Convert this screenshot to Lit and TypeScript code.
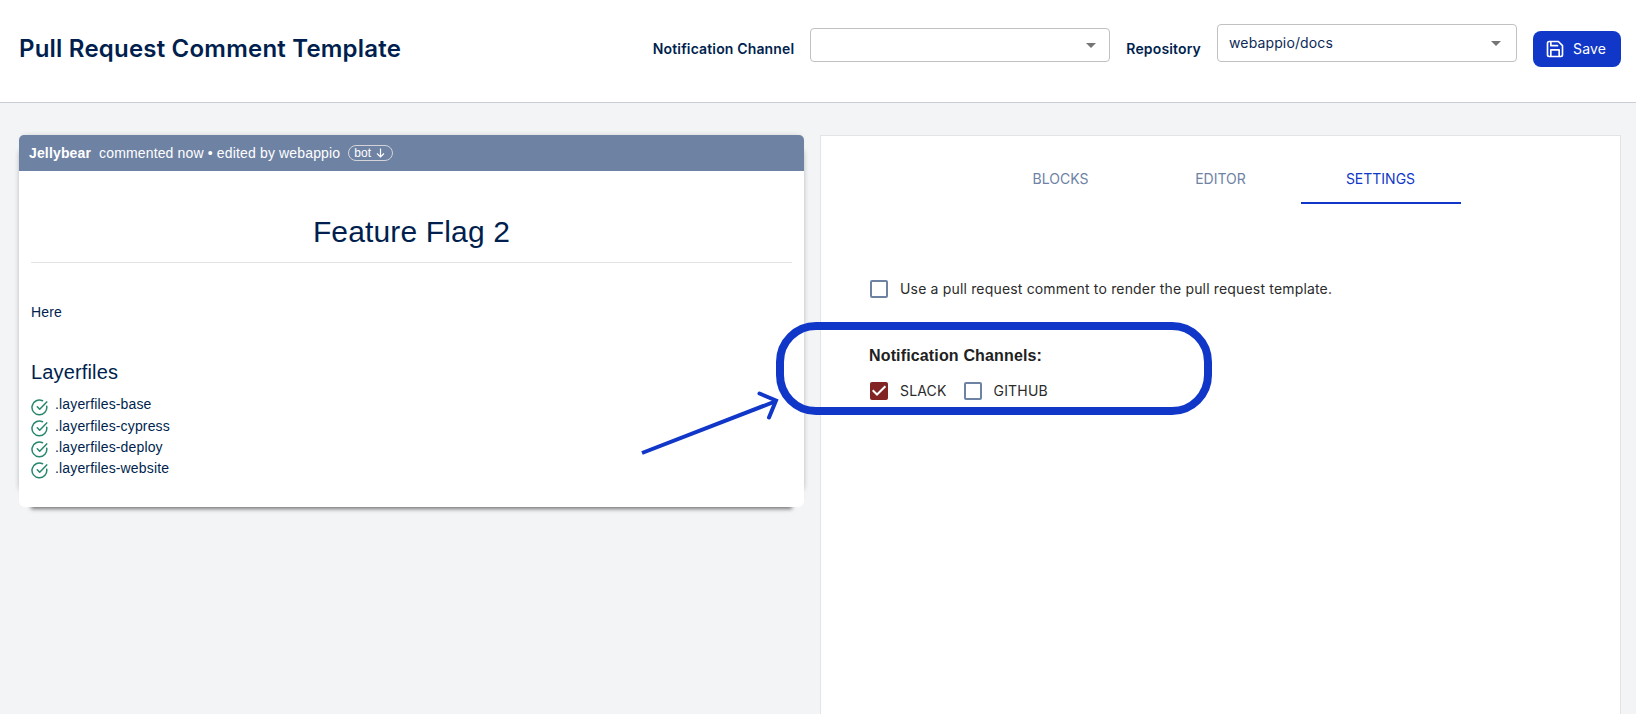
import { LitElement, html, css, svg } from "lit";
import { customElement, property } from "lit/decorators.js";

@customElement("select-field")
class SelectField extends LitElement {
  @property() value = "";
  static styles = css`
    :host { display: block; box-sizing: border-box; border: 1px solid #c1c1c1; border-radius: 4px; background: #fff; }
    .inner { height: 100%; display: flex; align-items: center; justify-content: space-between; padding: 0 var(--arrow-inset, 15px) 0 11px; }
    .value { font: 400 14px/20px Inter, sans-serif; letter-spacing: 0.13px; color: #0d2a56; }
    svg { display: block; fill: #757575; }
  `;
  render() {
    return html`<div class="inner"><span class="value">${this.value}</span>
      <svg width="10" height="5" viewBox="0 0 10 5"><path d="M0 0h10L5 5z" /></svg></div>`;
  }
}

@customElement("check-box")
class CheckBox extends LitElement {
  @property({ type: Boolean }) checked = false;
  @property() label = "";
  static styles = css`
    :host { display: flex; align-items: center; gap: 12px; }
    svg { display: block; flex: none; }
    .label { font: 400 14px/20px Inter, sans-serif; letter-spacing: 0.17px; color: #2b2b2b; white-space: nowrap; }
  `;
  render() {
    return html`<svg width="18" height="18" viewBox="0 0 18 18">
        ${this.checked
          ? svg`<rect width="18" height="18" rx="2" fill="#822424"/><path d="M2.7 8.3l4.3 4.2 8.4-8.2" fill="none" stroke="#fff" stroke-width="2"/>`
          : svg`<rect x="1" y="1" width="16" height="16" rx="1" fill="none" stroke="#6e82a4" stroke-width="2"/>`}
      </svg><span class="label">${this.label}</span>`;
  }
}

@customElement("app-root")
class AppRoot extends LitElement {
  static styles = css`
    :host { display: block; position: relative; height: 714px; overflow: hidden; background: #f3f4f6; color: #001f4e; font-family: Inter, sans-serif; }
    * { box-sizing: border-box; }
    .top { height: 103px; background: #fff; border-bottom: 1px solid #c9cdd6; display: flex; align-items: flex-start; padding: 0 15px 0 19px; }
    h1 { margin: 34px auto 0 0; font: 600 24px/30px Inter, sans-serif; letter-spacing: 0.21px; }
    .name { margin-top: 39px; font: 600 14px/20px Inter, sans-serif; letter-spacing: 0.15px; }
    .channel { width: 300px; height: 34px; margin: 28px 16px 0; --arrow-inset: 13px; }
    .repo { width: 300px; height: 38px; margin: 24px 16px 0; }
    .save { width: 88px; height: 36px; margin-top: 31px; border: 0; border-radius: 8px; background: #1037c8; color: #fff; display: flex; align-items: center; gap: 8px; padding: 0 0 0 12px; font: 400 14px/20px Inter, sans-serif; letter-spacing: 0.15px; }
    .main { display: flex; align-items: flex-start; gap: 16px; padding: 32px 15px 0 19px; }
    .card { position: relative; z-index: 0; width: 785px; height: 372px; font-family: "Liberation Sans", Arial, sans-serif; letter-spacing: 0.15px; }
    .card::before { content: ""; position: absolute; z-index: -1; inset: 16px 0 18px; box-shadow: 0 0 5px rgba(0,0,0,.22); }
    .sheet { height: 100%; border-radius: 6px; background: #fff; box-shadow: 0 14px 4px -12px rgba(0,0,0,.52), 0 -3px 6px -4px rgba(0,0,0,.18); }
    .bar { height: 36px; border-radius: 5px 5px 0 0; background: #6e82a4; color: #fff; display: flex; align-items: center; padding-left: 10px; font-size: 14px; }
    .who { font-weight: 700; margin-right: 8px; }
    .bot { display: flex; align-items: center; gap: 5px; height: 16px; margin-left: 8px; padding: 0 7px 0 5px; border: 1px solid #d4d4d8; border-radius: 8px; font-size: 12px; }
    .body { padding: 0 12px; }
    h2 { margin: 0; height: 92px; padding-top: 43px; border-bottom: 1px solid #e3e4e6; text-align: center; font-weight: 400; font-size: 30px; line-height: 36px; }
    .here { margin: 39px 0 0; font-size: 14px; line-height: 20px; }
    h3 { margin: 38px 0 0; font-weight: 400; font-size: 20px; line-height: 24px; }
    .files { list-style: none; margin: 10px 0 0; padding: 0; }
    .files li { display: flex; height: 21px; gap: 7px; font-size: 14px; line-height: 20px; }
    .files li + li { line-height: 22px; }
    .files svg { margin-top: 5px; flex: none; }
    .panel { flex: 1; height: 600px; border: 1px solid #e3e4e6; background: #fff; }
    .tabs { display: flex; justify-content: center; height: 68px; }
    .tab { width: 160px; padding-top: 33px; text-align: center; color: #6e82a4; font-size: 14px; line-height: 20px; }
    .tab.on { color: #1037c8; border-bottom: 2px solid #1037c8; }
    .use { margin: 75px 0 0 49px; }
    h4 { margin: 47px 0 0 48px; font: 700 16px/20px "Liberation Sans", Arial, sans-serif; letter-spacing: 0.15px; color: #212121; }
    .checks { display: flex; gap: 17px; margin: 15px 0 0 49px; }
    .note { position: absolute; left: 0; top: 0; z-index: 1; pointer-events: none; }
  `;
  files = ["base", "cypress", "deploy", "website"];
  render() {
    return html`
      <header class="top">
        <h1>Pull Request Comment Template</h1>
        <span class="name">Notification Channel</span>
        <select-field class="channel"></select-field>
        <span class="name">Repository</span>
        <select-field class="repo" value="webappio/docs"></select-field>
        <button class="save">
          <svg width="20" height="20" viewBox="0 0 24 24" fill="none" stroke="#fff" stroke-width="2" stroke-linejoin="round" stroke-linecap="round"><path d="M16 3H5a2 2 0 0 0-2 2v14a2 2 0 0 0 2 2h14a2 2 0 0 0 2-2V8zM7 3v5h8M7 21v-8h10v8" /></svg>
          Save
        </button>
      </header>
      <main class="main">
        <section class="card"><div class="sheet">
          <div class="bar"><span class="who">Jellybear</span><span>commented now • edited by webappio</span>
            <span class="bot">bot <svg width="9" height="10" viewBox="0 0 9 10" fill="none" stroke="#fff" stroke-width="1.2"><path d="M4.5 .5v8.5M1 5.5l3.5 3.5L8 5.5" /></svg></span>
          </div>
          <div class="body">
            <h2>Feature Flag 2</h2>
            <p class="here">Here</p>
            <h3>Layerfiles</h3>
            <ul class="files">
              ${this.files.map((f) => html`<li>
                <svg width="17" height="17" viewBox="0 0 17 17" fill="none" stroke="#26876d" stroke-width="1.5" stroke-linecap="round" stroke-linejoin="round"><path d="M15.7 7.2A7.4 7.4 0 1 1 11.5 1.7M6.3 7.8l2.4 2.4 7-7.3" /></svg>
                <span>.layerfiles-${f}</span></li>`)}
            </ul>
          </div>
        </div></section>
        <section class="panel">
          <nav class="tabs"><div class="tab">BLOCKS</div><div class="tab">EDITOR</div><div class="tab on">SETTINGS</div></nav>
          <check-box class="use" label="Use a pull request comment to render the pull request template."></check-box>
          <h4>Notification Channels:</h4>
          <div class="checks"><check-box checked label="SLACK"></check-box><check-box label="GITHUB"></check-box></div>
        </section>
      </main>
      <svg class="note" width="1636" height="714" viewBox="0 0 1636 714" fill="none" stroke="#1037c8">
        <rect x="780" y="326" width="428" height="85" rx="36" stroke-width="8" />
        <path d="M642 453L775 401.5" stroke-width="4" />
        <path d="M759.5 393.5L776 400.5L769 417.5" stroke-width="4" stroke-linecap="round" />
      </svg>
    `;
  }
}
